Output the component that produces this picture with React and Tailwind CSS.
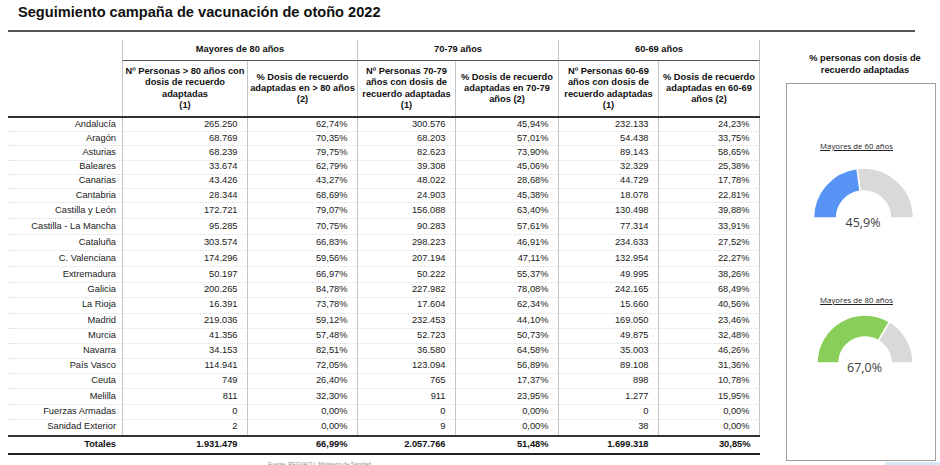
import React from "react";

const rows = [
  ["Andalucía", "265.250", "62,74%", "300.576", "45,94%", "232.133", "24,23%"],
  ["Aragón", "68.769", "70,35%", "68.203", "57,01%", "54.438", "33,75%"],
  ["Asturias", "68.239", "79,75%", "82.623", "73,90%", "89.143", "58,65%"],
  ["Baleares", "33.674", "62,79%", "39.308", "45,06%", "32.329", "25,38%"],
  ["Canarias", "43.426", "43,27%", "48.022", "28,68%", "44.729", "17,78%"],
  ["Cantabria", "28.344", "68,69%", "24.903", "45,38%", "18.078", "22,81%"],
  ["Castilla y León", "172.721", "79,07%", "156.088", "63,40%", "130.498", "39,88%"],
  ["Castilla - La Mancha", "95.285", "70,75%", "90.283", "57,61%", "77.314", "33,91%"],
  ["Cataluña", "303.574", "66,83%", "298.223", "46,91%", "234.633", "27,52%"],
  ["C. Valenciana", "174.296", "59,56%", "207.194", "47,11%", "132.954", "22,27%"],
  ["Extremadura", "50.197", "66,97%", "50.222", "55,37%", "49.995", "38,26%"],
  ["Galicia", "200.265", "84,78%", "227.982", "78,08%", "242.165", "68,49%"],
  ["La Rioja", "16.391", "73,78%", "17.604", "62,34%", "15.660", "40,56%"],
  ["Madrid", "219.036", "59,12%", "232.453", "44,10%", "169.050", "23,46%"],
  ["Murcia", "41.356", "57,48%", "52.723", "50,73%", "49.875", "32,48%"],
  ["Navarra", "34.153", "82,51%", "36.580", "64,58%", "35.003", "46,26%"],
  ["País Vasco", "114.941", "72,05%", "123.094", "56,89%", "89.108", "31,36%"],
  ["Ceuta", "749", "26,40%", "765", "17,37%", "898", "10,78%"],
  ["Melilla", "811", "32,30%", "911", "23,95%", "1.277", "15,95%"],
  ["Fuerzas Armadas", "0", "0,00%", "0", "0,00%", "0", "0,00%"],
  ["Sanidad Exterior", "2", "0,00%", "9", "0,00%", "38", "0,00%"],
];

const totals = ["Totales", "1.931.479", "66,99%", "2.057.766", "51,48%", "1.699.318", "30,85%"];

const colW = ["w-[125px]", "w-[110px]", "w-[98px]", "w-[103px]", "w-[100px]", "w-[102px]"];

const subHeaders = [
  ["Nº Personas > 80 años con", "dosis de recuerdo", "adaptadas", "(1)"],
  ["% Dosis de recuerdo", "adaptadas en > 80 años", "(2)"],
  ["Nº Personas 70-79", "años con dosis de", "recuerdo adaptadas", "(1)"],
  ["% Dosis de recuerdo", "adaptadas en 70-79", "años (2)"],
  ["Nº Personas 60-69", "años con dosis de", "recuerdo adaptadas", "(1)"],
  ["% Dosis de recuerdo", "adaptadas en 60-69", "años (2)"],
];

function rowH(i) {
  if (i < 6) return "h-[14.2px]";
  if (i < 11) return "h-[16px]";
  return "h-[15.2px]";
}

function Gauge({ p, color, cx, cy, R, r, text }) {
  const th = Math.PI * (1 - p);
  const ox = cx + R * Math.cos(th);
  const oy = cy - R * Math.sin(th);
  const ix = cx + r * Math.cos(th);
  const iy = cy - r * Math.sin(th);
  const colored = `M ${cx - R} ${cy} A ${R} ${R} 0 0 1 ${ox} ${oy} L ${ix} ${iy} A ${r} ${r} 0 0 0 ${cx - r} ${cy} Z`;
  const gray = `M ${ox} ${oy} A ${R} ${R} 0 0 1 ${cx + R} ${cy} L ${cx + r} ${cy} A ${r} ${r} 0 0 0 ${ix} ${iy} Z`;
  return (
    <svg width="148" height="75" viewBox="0 0 148 75" className="block">
      <path d={gray} fill="#d9d9d9" stroke="#ffffff" strokeWidth="1.5" />
      <path d={colored} fill={color} stroke="#ffffff" strokeWidth="1.5" />
      <text
        x={cx - 0.5}
        y={cy + 8.5}
        textAnchor="middle"
        fontFamily="'Open Sans', sans-serif"
        fontSize="12.5"
        fill="#404040"
      >
        {text}
      </text>
    </svg>
  );
}

export default function App() {
  return (
    <div className="w-[940px] h-[465px] overflow-hidden bg-white font-['Liberation_Sans',Arial,sans-serif] text-[#111]">
      <div className="pt-[4px] pl-[18px] text-[14.6px] leading-[17px] font-bold text-[#111]">
        Seguimiento campaña de vacunación de otoño 2022
      </div>
      <div className="mt-[9px] ml-[8px] w-[907px] h-[2px] bg-[#555]" />

      <div className="flex items-start mt-[8px]">
        {/* Table */}
        <div className="ml-[8px] w-[752px] flex flex-col">
          {/* Group header */}
          <div className="flex h-[21px]">
            <div className="w-[114px]" />
            <div className="w-[235px] border-l border-l-[#c4c4c4] border-b border-b-[#555] flex items-center justify-center font-bold text-[9.3px]">
              Mayores de 80 años
            </div>
            <div className="w-[201px] border-l border-l-[#c4c4c4] border-b border-b-[#555] flex items-center justify-center font-bold text-[9.3px]">
              70-79 años
            </div>
            <div className="w-[202px] border-l border-l-[#c4c4c4] border-r border-r-[#c4c4c4] border-b border-b-[#555] flex items-center justify-center font-bold text-[9.3px]">
              60-69 años
            </div>
          </div>
          {/* Sub header */}
          <div className="flex h-[55px]">
            <div className="w-[114px]" />
            {subHeaders.map((lines, i) => (
              <div
                key={i}
                className={`${colW[i]} border-l border-l-[#c4c4c4] ${i === 5 ? "border-r border-r-[#c4c4c4]" : ""} flex flex-col items-center justify-center text-center font-bold text-[9.3px] leading-[11.3px]`}
              >
                {lines.map((l, j) => (
                  <div key={j} className="whitespace-nowrap">
                    {l}
                  </div>
                ))}
              </div>
            ))}
          </div>
          <div className="h-[2px] bg-[#333]" />
          {/* Data rows */}
          {rows.map((row, i) => {
            const last = i === rows.length - 1;
            const dot = last ? "" : "border-b border-b-[#dedede] [border-bottom-style:dotted]";
            return (
              <div key={i} className={`flex ${rowH(i)} text-[9.3px] text-[#1a1a1a]`}>
                <div className={`w-[114px] flex items-center justify-end pr-[6px] whitespace-nowrap ${dot}`}>
                  {row[0]}
                </div>
                {row.slice(1).map((v, j) => (
                  <div
                    key={j}
                    className={`${colW[j]} border-l border-l-[#c4c4c4] ${j === 5 ? "border-r border-r-[#c4c4c4]" : ""} flex items-center justify-end pr-[9.5px] ${dot}`}
                  >
                    {v}
                  </div>
                ))}
              </div>
            );
          })}
          <div className="h-[1.5px] bg-[#333]" />
          <div className="flex h-[16px] text-[9.3px] font-bold">
            <div className="w-[114px] flex items-center justify-end pr-[6px]">{totals[0]}</div>
            {totals.slice(1).map((v, j) => (
              <div key={j} className={`${colW[j]} flex items-center justify-end pr-[9.5px]`}>
                {v}
              </div>
            ))}
          </div>
          <div className="h-[2px] bg-[#222]" />
          <div className="mt-[6px] ml-[260px] text-[5.5px] leading-[7px] text-[#8a8a8a] whitespace-nowrap">
            Fuente: REGVACU, Ministerio de Sanidad
          </div>
        </div>

        {/* Right panel */}
        <div className="ml-[26px] w-[158px] flex flex-col shrink-0">
          <div className="pt-[13px] text-center font-bold text-[9.3px] leading-[11.5px]">
            <div>% personas con dosis de</div>
            <div>recuerdo adaptadas</div>
          </div>
          <div className="mt-[7px] w-[150px] h-[378px] border border-[#a0a0a0] flex flex-col">
            <div className="mt-[57px] pr-[9px] text-center text-[7.8px] leading-[11px] underline font-['Open_Sans',sans-serif] text-[#222]">
              Mayores de 60 años
            </div>
            <div className="mt-[8px]">
              <Gauge p={0.459} color="#5894f6" cx={76.5} cy={58} R={50} r={27} text="45,9%" />
            </div>
            <div className="mt-[59.5px] pr-[9px] text-center text-[7.8px] leading-[11px] underline font-['Open_Sans',sans-serif] text-[#222]">
              Mayores de 80 años
            </div>
            <div className="mt-[4.5px]">
              <Gauge p={0.67} color="#8ace5a" cx={78} cy={53} R={48} r={26} text="67,0%" />
            </div>
          </div>
          <div className="mt-[1px] ml-[99px] w-[60px] h-[3px] bg-[#d4eaf9]" />
        </div>
      </div>
    </div>
  );
}
